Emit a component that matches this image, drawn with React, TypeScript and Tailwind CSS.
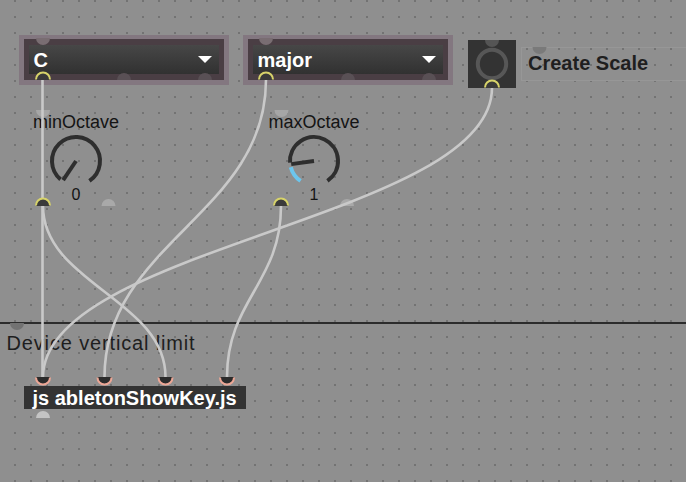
import React from "react";

const FONT = "font-['Liberation_Sans',Arial,sans-serif]";

const pt = (cx: number, cy: number, r: number, deg: number) => {
  const a = (deg * Math.PI) / 180;
  return [cx + r * Math.sin(a), cy - r * Math.cos(a)];
};

// clockwise arc, angles measured clockwise from 12 o'clock
function arcPath(cx: number, cy: number, r: number, from: number, to: number) {
  let span = to - from;
  if (span < 0) span += 360;
  const [x0, y0] = pt(cx, cy, r, from);
  const [x1, y1] = pt(cx, cy, r, from + span);
  return `M ${x0} ${y0} A ${r} ${r} 0 ${span > 180 ? 1 : 0} 1 ${x1} ${y1}`;
}

// patch cord: vertical tangents at both ends, like Max's curved cords
function cord(x1: number, y1: number, x2: number, y2: number) {
  const k = Math.abs(y2 - y1) * 0.45;
  return `M ${x1} ${y1} C ${x1} ${y1 + k} ${x2} ${y2 - k} ${x2} ${y2}`;
}

const R = 7;
const lower = (cx: number, y: number) => `M ${cx - R} ${y} A ${R} ${R} 0 0 0 ${cx + R} ${y} Z`;
const upper = (cx: number, y: number) => `M ${cx - R} ${y} A ${R} ${R} 0 0 1 ${cx + R} ${y} Z`;
const lowerArc = (cx: number, y: number) => `M ${cx - R} ${y} A ${R} ${R} 0 0 0 ${cx + R} ${y}`;
const upperArc = (cx: number, y: number) => `M ${cx - R} ${y} A ${R} ${R} 0 0 1 ${cx + R} ${y}`;

function Umenu({ left, label }: { left: number; label: string }) {
  return (
    <div className="absolute top-[35px] h-[50px] w-[210px] bg-[#837780] px-[5px] pt-[4px]" style={{ left }}>
      <div className="h-[41px] bg-[#4a3e44] px-[5px] py-[6px]">
        <div className="flex h-[29px] items-center justify-between bg-linear-to-b from-[#474747] to-[#313131] pl-[4.5px] pr-[7.5px]">
          <span className="text-[20px] font-bold leading-none text-white">{label}</span>
          <span className="h-0 w-0 border-x-[7.5px] border-t-[7px] border-x-transparent border-t-white" />
        </div>
      </div>
    </div>
  );
}

function Dial({ cx, label, value, pos }: { cx: number; label: string; value: string; pos: number }) {
  const c = 28;
  const start = 214;
  const end = 146;
  const needle = start + pos * 292;
  const [nx, ny] = pt(c, c, 23, needle);
  return (
    <div className="absolute top-[113px] flex w-[110px] flex-col items-center text-[#141414]" style={{ left: cx - 55 }}>
      <span className="h-[18px] text-[18px] leading-none">{label}</span>
      <svg width="56" height="54" viewBox="0 0 56 54" className="mt-[2px]">
        {pos > 0 ? (
          <>
            <path d={arcPath(c, c, 24, start, needle - 7)} fill="none" stroke="#6cc6ee" strokeWidth="4" />
            <path d={arcPath(c, c, 24, needle + 4, end)} fill="none" stroke="#2e2e2e" strokeWidth="4" />
          </>
        ) : (
          <path d={arcPath(c, c, 24, start + 6, end)} fill="none" stroke="#2e2e2e" strokeWidth="4" />
        )}
        <line x1={c} y1={c} x2={nx} y2={ny} stroke="#2e2e2e" strokeWidth="4" />
      </svg>
      <span className="-mt-[0.5px] text-[16px] leading-none">{value}</span>
    </div>
  );
}

export default function App() {
  return (
    <div
      className={`relative h-[482px] w-[686px] overflow-hidden bg-[#8f8f8f] ${FONT} [background-image:radial-gradient(circle,#737373_1.15px,transparent_1.35px)] [background-position:7px_9px] [background-size:16px_16px]`}
    >
      <Umenu left={19} label="C" />
      <Umenu left={243} label="major" />

      {/* textbutton */}
      <div className="absolute left-[468px] top-[40px] flex h-[48px] w-[48px] items-center justify-center bg-[#333333]">
        <svg width="34" height="34" viewBox="0 0 34 34">
          <circle cx="17" cy="17" r="14.2" fill="none" stroke="#575757" strokeWidth="4" />
        </svg>
      </div>

      {/* comment */}
      <div className="absolute left-[521px] top-[47px] h-[34px] w-[180px] border border-[#979797] pl-[6px] pt-[4.5px]">
        <span className="block text-[20px] font-bold leading-none text-[#1f1f1f]">Create Scale</span>
      </div>

      <Dial cx={76} label="minOctave" value="0" pos={0} />
      <Dial cx={314} label="maxOctave" value="1" pos={0.165} />

      {/* device vertical limit */}
      <div className="absolute left-0 top-[322px] flex w-full flex-col">
        <div className="h-[1.5px] w-full bg-[#2c2c2c]" />
        <span className="ml-[6.5px] mt-[9px] text-[20px] leading-none tracking-[0.85px] text-[#1e1e1e]">
          Device vertical limit
        </span>
      </div>

      {/* js object */}
      <div className="absolute left-[24px] top-[386px] flex h-[23px] w-[222px] items-center bg-[#333333] pl-[8.5px]">
        <span className="text-[20px] font-bold leading-none text-white">js abletonShowKey.js</span>
      </div>

      <svg className="pointer-events-none absolute left-0 top-0" width="686" height="482" viewBox="0 0 686 482">
        {/* unconnected ports */}
        <path d={lower(43, 38)} fill="#796d72" />
        <path d={lower(266, 38)} fill="#796d72" />
        <path d={upper(124, 80)} fill="#595055" />
        <path d={upper(205, 80)} fill="#595055" />
        <path d={upper(348, 80)} fill="#595055" />
        <path d={upper(429, 80)} fill="#595055" />
        <path d={lower(492, 40)} fill="#555555" />
        <path d={lower(539.5, 47)} fill="#7a7a7a" />
        <path d={lower(43, 110)} fill="#a6a6a6" />
        <path d={lower(281.5, 110)} fill="#a6a6a6" />
        <path d={upper(108.5, 206)} fill="#a9a9a9" />
        <path d={upper(347, 206)} fill="#a9a9a9" />
        <path d={lower(17, 323)} fill="#727272" />
        <path d={upper(43, 418)} fill="#c4c4c4" />

        {/* patch cords */}
        <g fill="none" stroke="#c9c9c9" strokeWidth="2.6" strokeLinecap="round">
          <path d={cord(42.5, 80, 42.5, 377)} />
          <path d={cord(266, 80, 104.5, 377)} />
          <path d={cord(492, 88, 43, 377)} />
          <path d={cord(43, 206, 165.5, 377)} />
          <path d={cord(281, 206, 227, 377)} />
        </g>

        {/* connected outlets */}
        {[
          [43, 80],
          [266, 80],
          [492, 88],
          [43, 206],
          [281, 206],
        ].map(([x, y], i) => (
          <g key={i}>
            <path d={upper(x, y)} fill="#3a3a3a" />
            <path d={upperArc(x, y - 0.5)} fill="none" stroke="#d7d36a" strokeWidth="2" />
          </g>
        ))}

        {/* connected inlets of js */}
        {[43, 104.5, 165.5, 227].map((x, i) => (
          <g key={i}>
            <path d={lower(x, 377)} fill="#2b2b2b" />
            <path d={lowerArc(x, 377.5)} fill="none" stroke="#eda796" strokeWidth="2" />
          </g>
        ))}
      </svg>
    </div>
  );
}
